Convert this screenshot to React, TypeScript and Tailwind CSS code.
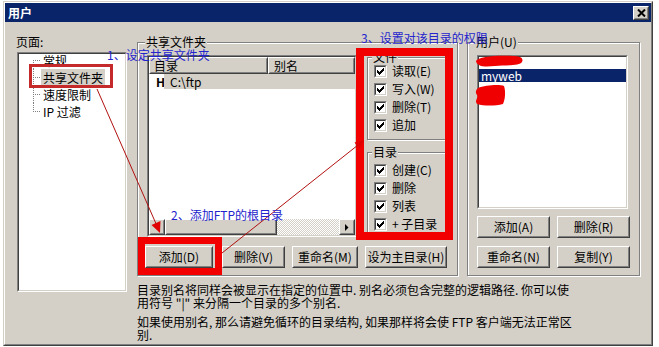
import type { ReactNode } from "react"

interface BoxProps {
  className?: string
  inner?: string
  children?: ReactNode
}

// classic 3D raised edge (buttons, header cells)
const Raised = ({ className = "", inner = "items-center justify-center", children }: BoxProps) => (
  <div className={`border border-t-white border-l-white border-r-[#404040] border-b-[#404040] bg-[#d4d0c8] ${className}`}>
    <div className={`flex h-full w-full border border-t-[#d4d0c8] border-l-[#d4d0c8] border-r-[#808080] border-b-[#808080] ${inner}`}>
      {children}
    </div>
  </div>
)

// classic 3D sunken edge (list boxes, tree, check boxes)
const Sunken = ({ className = "", inner = "", children }: BoxProps) => (
  <div className={`border border-t-[#808080] border-l-[#808080] border-r-white border-b-white ${className}`}>
    <div className={`h-full w-full border border-t-[#404040] border-l-[#404040] border-r-[#d4d0c8] border-b-[#d4d0c8] bg-white ${inner}`}>
      {children}
    </div>
  </div>
)

const Button = ({ label, width }: { label: string; width: string }) => (
  <Raised className={`h-[22px] ${width}`}>
    <span className="leading-[12px]">{label}</span>
  </Raised>
)

interface GroupProps {
  label: string
  className?: string
  labelPos?: string
  children?: ReactNode
}

const Group = ({ label, className = "", labelPos = "left-[7px]", children }: GroupProps) => (
  <div className={`relative border border-[#808080] shadow-[inset_1px_1px_0_#fff,1px_1px_0_#fff] ${className}`}>
    <span className={`absolute -top-[7px] bg-[#d4d0c8] px-[1px] leading-[12px] whitespace-nowrap ${labelPos}`}>
      {label}
    </span>
    {children}
  </div>
)

const checkCols = [2, 3, 4, 3, 2, 1, 0]

const Check = ({ label }: { label: string }) => (
  <div className="flex h-[18px] items-center">
    <Sunken className="h-[13px] w-[13px] shrink-0" inner="flex items-center justify-center">
      <svg width="7" height="7" viewBox="0 0 7 7" shapeRendering="crispEdges">
        {checkCols.map((y, x) => (
          <rect key={x} x={x} y={y} width="1" height="3" fill="#000" />
        ))}
      </svg>
    </Sunken>
    <span className="ml-[5px] leading-[12px] whitespace-nowrap">{label}</span>
  </div>
)

const treeItems = ["常规", "共享文件夹", "速度限制", "IP 过滤"]

const Tree = () => (
  <Sunken className="ml-[1px] h-[240px] w-[110px]">
    <div className="-mt-[2px]">
      {treeItems.map((item, i) => (
        <div key={item} className="flex h-[17px] items-stretch pl-[14px]">
          <svg width="8" height="17" className="shrink-0">
            <line
              x1="0.5"
              y1={i === 0 ? 8 : 0}
              x2="0.5"
              y2={i === treeItems.length - 1 ? 9 : 17}
              stroke="#808080"
              strokeDasharray="1 1"
            />
            <line x1="0" y1="8.5" x2="8" y2="8.5" stroke="#808080" strokeDasharray="1 1" />
          </svg>
          <span
            className={`flex items-center px-[2px] whitespace-nowrap ${
              i === 1 ? "bg-[#d4d0c8]" : ""
            }`}
          >
            {item}
          </span>
        </div>
      ))}
    </div>
  </Sunken>
)

const ScrollArrow = ({ dir }: { dir: "left" | "right" }) => (
  <Raised className="h-[16px] w-[16px] shrink-0">
    <svg width="4" height="7" viewBox="0 0 4 7">
      {dir === "left" ? (
        <polygon points="4,0 4,7 0.5,3.5" fill="#000" />
      ) : (
        <polygon points="0,0 0,7 3.5,3.5" fill="#000" />
      )}
    </svg>
  </Raised>
)

const FolderList = () => (
  <Sunken className="ml-[2px] h-[182px] w-[210px] shrink-0" inner="flex flex-col">
    <div className="flex h-[17px] shrink-0">
      <Raised className="h-full w-[119px]" inner="items-center pl-[3px]">
        <span className="leading-[12px]">目录</span>
      </Raised>
      <Raised className="h-full flex-1" inner="items-center pl-[4px]">
        <span className="leading-[12px]">别名</span>
      </Raised>
    </div>
    <div className="flex h-[15px] items-stretch pl-[7px]">
      <span className="flex w-[8px] items-center font-bold">H</span>
      <span className="flex flex-1 items-center bg-[#d4d0c8] pl-[6px]">C:\ftp</span>
    </div>
    <div className="flex-1" />
    <div className="flex h-[16px] shrink-0">
      <ScrollArrow dir="left" />
      <Raised className="h-full w-[112px] shrink-0" />
      <div className="h-full flex-1 bg-[repeating-conic-gradient(#d4d0c8_0_25%,#ffffff_0_50%)] [background-size:2px_2px]" />
      <ScrollArrow dir="right" />
    </div>
  </Sunken>
)

const Permissions = () => (
  <div className="ml-[10px] mt-[2px] w-[80px] shrink-0">
    <Group label="文件" labelPos="left-[4px]" className="h-[83px]">
      <div className="pl-[6px] pt-[4px]">
        <Check label="读取(E)" />
        <Check label="写入(W)" />
        <Check label="删除(T)" />
        <Check label="追加" />
      </div>
    </Group>
    <Group label="目录" labelPos="left-[4px]" className="mt-[12px] h-[86px]">
      <div className="pl-[6px] pt-[8px]">
        <Check label="创建(C)" />
        <Check label="删除" />
        <Check label="列表" />
        <Check label="+ 子目录" />
      </div>
    </Group>
  </div>
)

export default function App() {
  return (
    <div className="relative h-[347px] w-[659px] overflow-hidden bg-white font-['Noto_Sans_CJK_SC',sans-serif] text-[12px] text-black">
      <div className="ml-[3px] mt-[1px] h-[345px] w-[650px] border border-t-[#d4d0c8] border-l-[#d4d0c8] border-r-[#404040] border-b-[#404040]">
        <div className="flex h-full flex-col border border-t-white border-l-white border-r-[#808080] border-b-[#808080] bg-[#d4d0c8]">
          {/* title bar */}
          <div className="flex h-[19px] shrink-0 items-center justify-between bg-[#0a246a] pl-[3px] pr-[2px]">
            <span className="font-bold leading-[12px] text-white">用户</span>
            <Raised className="h-[14px] w-[16px] shrink-0">
              <svg width="9" height="8" viewBox="0 0 9 8" className="block shrink-0">
                <path d="M1 0.5 L8 7.5 M8 0.5 L1 7.5" stroke="#000000" strokeWidth="2" fill="none" />
              </svg>
            </Raised>
          </div>

          {/* body */}
          <div className="flex flex-1 items-start pl-[11px]">
            <div className="flex w-[111px] shrink-0 flex-col pt-[14px]">
              <span className="h-[12px] leading-[12px]">页面:</span>
              <div className="mt-[4px]">
                <Tree />
              </div>
            </div>

            <div className="ml-[10px] flex flex-col pt-[20px]">
              <div className="flex gap-[9px]">
                <Group label="共享文件夹" className="h-[234px] w-[321px] shrink-0">
                  <div className="flex flex-col pl-[7px] pt-[12px]">
                    <div className="flex items-start">
                      <FolderList />
                      <Permissions />
                    </div>
                    <div className="mt-[8px] flex">
                      <Button label="添加(D)" width="w-[68px]" />
                      <div className="ml-[9px]">
                        <Button label="删除(V)" width="w-[63px]" />
                      </div>
                      <div className="ml-[7px]">
                        <Button label="重命名(M)" width="w-[66px]" />
                      </div>
                      <div className="ml-[7px]">
                        <Button label="设为主目录(H)" width="w-[82px]" />
                      </div>
                    </div>
                  </div>
                </Group>

                <Group label="用户(U)" className="h-[234px] w-[173px] shrink-0">
                  <div className="flex flex-col pl-[9px] pt-[12px]">
                    <Sunken className="h-[154px] w-[151px]">
                      <div className="-mt-[1px]">
                        <div className="h-[13px]" />
                        <div className="flex h-[13px] items-center bg-[#0a246a] pl-[2px] text-white">
                          myweb
                        </div>
                      </div>
                    </Sunken>
                    <div className="mt-[7px] flex gap-[7px]">
                      <Button label="添加(A)" width="w-[73px]" />
                      <Button label="删除(R)" width="w-[73px]" />
                    </div>
                    <div className="mt-[8px] flex gap-[7px]">
                      <Button label="重命名(N)" width="w-[73px]" />
                      <Button label="复制(Y)" width="w-[73px]" />
                    </div>
                  </div>
                </Group>
              </div>

              <div className="mt-[7px] leading-[13px] whitespace-nowrap">
                <p>目录别名将同样会被显示在指定的位置中. 别名必须包含完整的逻辑路径. 你可以使</p>
                <p>用符号 "|" 来分隔一个目录的多个别名.</p>
                <p className="mt-[6px]">如果使用别名, 那么请避免循环的目录结构, 如果那样将会使 FTP 客户端无法正常区</p>
                <p>别.</p>
              </div>
            </div>
          </div>
        </div>
      </div>

      {/* red markup drawn over the screenshot */}
      <svg className="pointer-events-none absolute left-0 top-0" width="659" height="347">
        <rect x="30.5" y="65.5" width="81" height="21" fill="none" stroke="#c42a2a" strokeWidth="3" />
        <rect x="360" y="52" width="89" height="184" fill="none" stroke="#f20000" strokeWidth="8" />
        <rect x="141.5" y="240.5" width="77" height="31" fill="none" stroke="#f20000" strokeWidth="7" />
        <line x1="97" y1="89" x2="157" y2="226" stroke="#b01010" strokeWidth="1" />
        <polygon points="160,233 151.5,225 160.5,221" fill="#e00000" />
        <line x1="222" y1="253" x2="358" y2="145" stroke="#b01010" strokeWidth="1" />
        <polygon points="364,140 354.5,142.5 359.5,148.7" fill="#e00000" />
        <path
          d="M476 61 C478 56 500 55 512 56 C520 56 524 58 522 62 C520 66 505 65 495 66 C485 67 477 67 476 61 Z"
          fill="#f00000"
        />
        <path
          d="M478 88 C485 85 500 84 504 86 C506 92 505 100 503 104 C495 106 484 106 477 104 C474 100 479 98 477 95 C475 92 476 90 478 88 Z"
          fill="#f00000"
        />
      </svg>
      <span className="absolute left-[107px] top-[49px] leading-[12px] whitespace-nowrap text-[#2424cc]">
        1、设定共享文件夹
      </span>
      <span className="absolute left-[171px] top-[209px] leading-[12px] whitespace-nowrap text-[#2424cc]">
        2、添加FTP的根目录
      </span>
      <span className="absolute left-[361px] top-[32px] leading-[12px] whitespace-nowrap text-[#2424cc]">
        3、设置对该目录的权限
      </span>
    </div>
  )
}
